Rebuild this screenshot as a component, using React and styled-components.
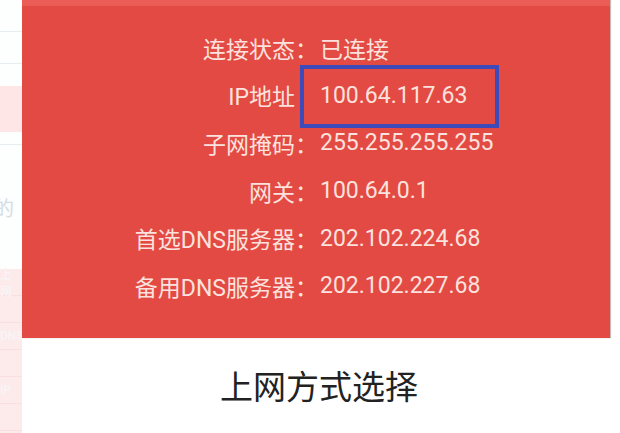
import React from 'react';
import styled, { createGlobalStyle } from 'styled-components';

const GlobalStyle = createGlobalStyle`
  html, body {
    margin: 0;
    padding: 0;
    background: #ffffff;
  }
  #root {
    width: 620px;
    height: 433px;
    overflow: hidden;
  }
`;

const Screen = styled.div`
  display: flex;
  width: 620px;
  height: 433px;
  font-family: Roboto, "Noto Sans CJK SC", sans-serif;
`;

const BackPage = styled.div`
  width: 22px;
  flex-shrink: 0;
  display: flex;
  flex-direction: column;
  background: #fdfefe;
  overflow: hidden;
`;

const BackLine = styled.div`
  height: ${p => p.gap}px;
  flex-shrink: 0;
  border-bottom: 1px solid #e6edf0;
`;

const BackBlock = styled.div`
  height: ${p => p.h}px;
  flex-shrink: 0;
  margin: 22px 0 12px;
  background: #fde6e5;
`;

const BackText = styled.div`
  height: ${p => p.h}px;
  flex-shrink: 0;
  display: flex;
  align-items: center;
  margin-left: -6px;
  font-size: 20px;
  color: #d3dde5;
`;

const BackList = styled.div`
  flex: 1;
  display: flex;
  flex-direction: column;
  background: #fdeaea;
`;

const BackItem = styled.div`
  height: 26px;
  flex-shrink: 0;
  display: flex;
  align-items: center;
  font-size: 12px;
  font-weight: 700;
  color: #f8f4f6;
  border-bottom: 1px solid #f9e0df;
`;

const Dialog = styled.div`
  flex: 1;
  display: flex;
  flex-direction: column;
  background: #ffffff;
`;

const InfoPanel = styled.div`
  width: 588px;
  height: 338px;
  flex-shrink: 0;
  box-sizing: border-box;
  background: #e34a43;
  border-top: 6px solid #ea5c55;
  padding-top: 18px;
  box-shadow: 1px 0 1px rgba(90, 60, 60, 0.35);
`;

const InfoGrid = styled.div`
  display: grid;
  grid-template-columns: 296px auto;
  grid-auto-rows: 47.6px;
  align-items: center;
`;

const Label = styled.div`
  text-align: right;
  padding-right: ${p => (p.$bare ? '23px' : '0')};
  font-size: 23px;
  color: #fbe2de;
  white-space: nowrap;
`;

const Value = styled.div`
  position: relative;
  padding-left: 2px;
  font-size: 23px;
  color: #fbe2de;
  white-space: nowrap;
`;

const Marker = styled.div`
  position: absolute;
  left: -18px;
  top: -17px;
  width: 199px;
  height: 63px;
  box-sizing: border-box;
  border: 4px solid #3d4ab9;
`;

const TitleBar = styled.div`
  flex: 1;
  display: flex;
  justify-content: center;
  align-items: center;
  padding-right: 4px;
  padding-bottom: 2px;
  font-size: 33px;
  color: #222222;
`;

const rows = [
  { label: '连接状态：', value: '已连接' },
  { label: 'IP地址', value: '100.64.117.63', marked: true },
  { label: '子网掩码：', value: '255.255.255.255' },
  { label: '网关：', value: '100.64.0.1' },
  { label: '首选DNS服务器：', value: '202.102.224.68' },
  { label: '备用DNS服务器：', value: '202.102.227.68' },
];

export default function App() {
  return (
    <>
      <GlobalStyle />
      <Screen>
        <BackPage>
          <BackLine gap={31} />
          <BackLine gap={31} />
          <BackBlock h={46} />
          <BackLine gap={0} />
          <BackText h={124}>的</BackText>
          <BackList>
            {['上网', '', 'DNS', '', 'IP', ''].map((t, i) => (
              <BackItem key={i}>{t}</BackItem>
            ))}
          </BackList>
        </BackPage>
        <Dialog>
          <InfoPanel>
            <InfoGrid>
              {rows.map(row => (
                <React.Fragment key={row.label}>
                  <Label $bare={row.marked}>{row.label}</Label>
                  <Value>
                    {row.value}
                    {row.marked && <Marker />}
                  </Value>
                </React.Fragment>
              ))}
            </InfoGrid>
          </InfoPanel>
          <TitleBar>上网方式选择</TitleBar>
        </Dialog>
      </Screen>
    </>
  );
}
